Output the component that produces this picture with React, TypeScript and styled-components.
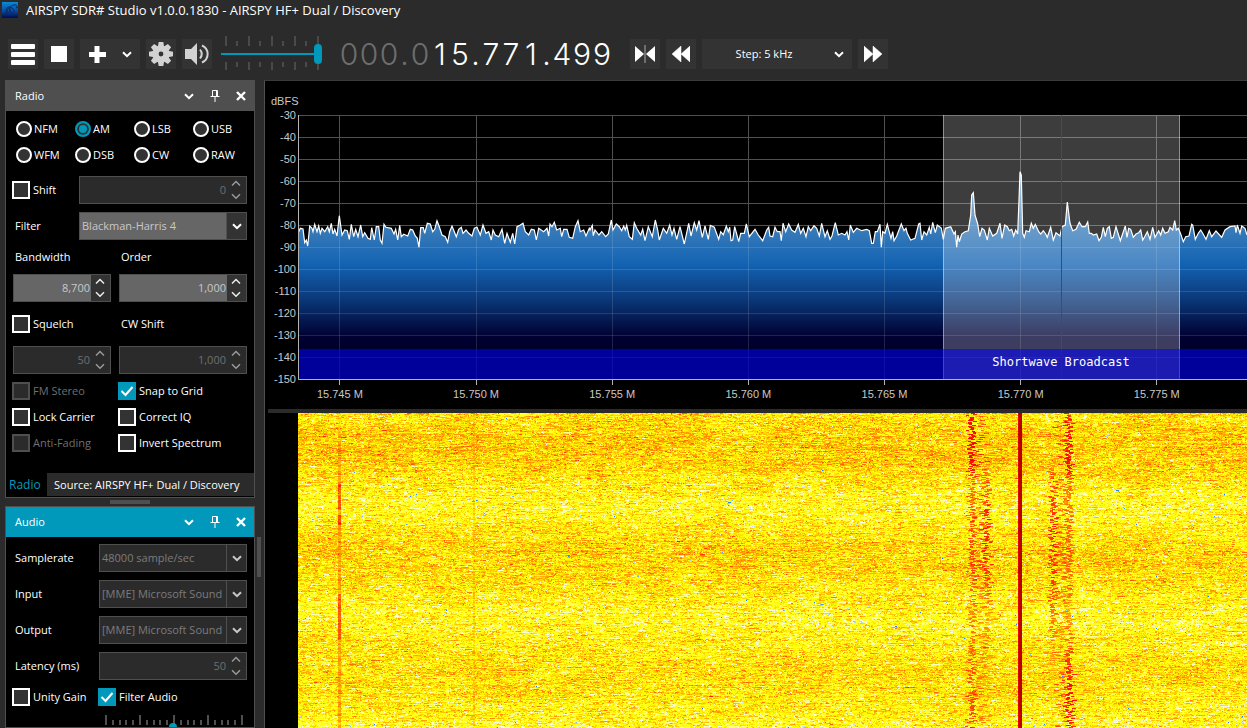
import React, { useEffect, useLayoutEffect, useRef, useState } from "react";
import styled, { createGlobalStyle } from "styled-components";

const color = {
  window: "#2b2b2b",
  button: "#333333",
  line: "#4f4f4f",
  accent: "#0099bc",
  dim: "#6f6f6f",
};

const GlobalStyle = createGlobalStyle`
  * { box-sizing: border-box; }
  body {
    margin: 0;
    background: ${color.window};
    color: #fff;
    font-family: "Open Sans", "Noto Sans", sans-serif;
    font-size: 11px;
    line-height: 16px;
  }
  button, input, select { font: inherit; color: inherit; margin: 0; }
`;

/* ---------- window chrome ---------- */

const Window = styled.div`
  display: flex;
  flex-direction: column;
  height: 100vh;
  overflow: hidden;
`;

const TitleBar = styled.header`
  display: flex;
  align-items: center;
  gap: 8px;
  height: 20px;
  padding-left: 2px;
  font-size: 13px;
  line-height: 20px;
  flex: none;
`;

const TitleText = styled.h1`
  margin: 0;
  font-size: inherit;
  font-weight: 400;
`;

const Toolbar = styled.div`
  display: flex;
  align-items: center;
  gap: 6px;
  height: 60px;
  padding: 8px 8px 0;
  flex: none;
`;

const ToolButton = styled.button<{ $wide?: boolean }>`
  display: flex;
  align-items: center;
  justify-content: ${(p) => (p.$wide ? "space-between" : "center")};
  width: ${(p) => (p.$wide ? 60 : 30)}px;
  height: 30px;
  padding: ${(p) => (p.$wide ? "0 8px" : "0")};
  border: 0;
  background: ${color.button};
  flex: none;
`;

const VolumeBox = styled.div`
  position: relative;
  width: 104px;
  height: 36px;
  margin-left: 3px;
  flex: none;
`;

const VolumeTicks = styled.svg`
  position: absolute;
  inset: 0;
`;

const VolumeRange = styled.input`
  position: relative;
  display: block;
  appearance: none;
  width: 101px;
  height: 36px;
  background: transparent;
  &::-webkit-slider-runnable-track {
    height: 2px;
    background: ${color.accent};
  }
  &::-webkit-slider-thumb {
    appearance: none;
    width: 8px;
    height: 20px;
    margin-top: -9px;
    border-radius: 4px;
    background: ${color.accent};
  }
`;

const Frequency = styled.output`
  display: flex;
  margin: 0 12px 0 8px;
  font-family: Inter, "Open Sans", sans-serif;
  font-size: 30px;
  font-weight: 300;
  line-height: 30px;
  flex: none;
`;

const Digit = styled.span<{ $dim: boolean; $dot: boolean }>`
  width: ${(p) => (p.$dot ? 11 : 20)}px;
  text-align: center;
  color: ${(p) => (p.$dim ? "#6e6e6e" : "#fff")};
`;

const StepBox = styled.div`
  display: grid;
  align-items: center;
  width: 150px;
  height: 30px;
  background: ${color.button};
  flex: none;
`;

const StepSelect = styled.select`
  grid-area: 1 / 1;
  appearance: none;
  width: 100%;
  height: 30px;
  padding: 0 26px 0 0;
  border: 0;
  background: transparent;
  text-align: center;
  text-align-last: center;
`;

const StepArrow = styled.span`
  grid-area: 1 / 1;
  display: flex;
  justify-self: end;
  padding-right: 8px;
  pointer-events: none;
`;

/* ---------- side panels ---------- */

const Body = styled.div`
  display: flex;
  flex: 1;
  min-height: 0;
`;

const Sidebar = styled.aside`
  display: flex;
  flex-direction: column;
  width: 264px;
  padding-left: 5px;
  flex: none;
`;

const Panel = styled.section`
  width: 250px;
  border: 1px solid ${color.line};
  background: #000;
  overflow: hidden;
  flex: none;
`;

const PanelHead = styled.header<{ $active?: boolean }>`
  display: flex;
  align-items: center;
  gap: 8px;
  height: 30px;
  padding: 0 4px 0 9px;
  background: ${(p) => (p.$active ? color.accent : color.line)};
`;

const PanelTitle = styled.h2`
  flex: 1;
  margin: 0;
  font-size: inherit;
  font-weight: 400;
`;

const IconButton = styled.button`
  display: flex;
  align-items: center;
  justify-content: center;
  width: 18px;
  height: 20px;
  padding: 0;
  border: 0;
  background: transparent;
`;

const PanelBody = styled.div<{ $tight?: boolean }>`
  padding: ${(p) => (p.$tight ? 3 : 5)}px 7px 0 6px;
`;

const ModeGrid = styled.fieldset`
  display: grid;
  grid-template-columns: repeat(4, 59px);
  grid-auto-rows: 26px;
  margin: 0 0 4px;
  padding: 0 0 0 4px;
  border: 0;
`;

const Check = styled.label<{ $off?: boolean; $near?: boolean }>`
  display: flex;
  align-items: center;
  gap: ${(p) => (p.$near ? 2 : 3)}px;
  white-space: nowrap;
  color: ${(p) => (p.$off ? color.dim : "#fff")};
`;

const RadioInput = styled.input`
  appearance: none;
  width: 16px;
  height: 16px;
  border: 2px solid #fff;
  border-radius: 50%;
  background: ${color.button};
  flex: none;
  &:checked {
    border-color: ${color.accent};
    background: ${color.accent};
    box-shadow: inset 0 0 0 2px ${color.button};
  }
`;

const TickFrame = styled.span`
  display: grid;
  flex: none;
`;

const TickInput = styled.input`
  grid-area: 1 / 1;
  appearance: none;
  width: 18px;
  height: 18px;
  border: 2px solid #fff;
  background: ${color.button};
  &:checked {
    border-color: ${color.accent};
    background: ${color.accent};
  }
  &:disabled {
    border-color: ${color.line};
    background: ${color.window};
  }
`;

const TickMark = styled.svg`
  grid-area: 1 / 1;
  pointer-events: none;
`;

const Row = styled.div<{ $cols: string; $height?: number }>`
  display: grid;
  grid-template-columns: ${(p) => p.$cols} minmax(0, 1fr);
  align-items: center;
  height: ${(p) => p.$height ?? 36}px;
`;

const FieldLabel = styled.label`
  padding-left: 3px;
`;

const Field = styled.div<{ $off?: boolean }>`
  display: flex;
  height: 28px;
  border: 1px solid ${color.line};
  background: ${(p) => (p.$off ? color.window : "#666")};
  color: ${(p) => (p.$off ? color.dim : "#c8c8c8")};
`;

const NumberInput = styled.input`
  flex: 1;
  min-width: 0;
  padding: 0 1px;
  border: 0;
  background: transparent;
  text-align: right;
`;

const SpinButtons = styled.div<{ $off?: boolean }>`
  display: grid;
  grid-template-rows: 1fr 1fr;
  width: 19px;
  flex: none;
  background: ${(p) => (p.$off ? color.window : color.button)};
  color: ${(p) => (p.$off ? "#9a9a9a" : "#eee")};
`;

const SpinButton = styled.button`
  display: flex;
  align-items: center;
  justify-content: center;
  padding: 0 1px 0 0;
  border: 0;
  background: transparent;
`;

const SelectBox = styled.div<{ $off?: boolean }>`
  display: grid;
  grid-template-columns: minmax(0, 1fr) 20px;
  height: 28px;
  border: 1px solid ${color.line};
  background: ${(p) => (p.$off ? color.window : "#666")};
  color: ${(p) => (p.$off ? "#7c7c7c" : "#c8c8c8")};
`;

const SelectInput = styled.select`
  grid-area: 1 / 1 / 2 / 3;
  appearance: none;
  min-width: 0;
  padding: 0 22px 0 2px;
  border: 0;
  background: transparent;
  opacity: 1;
`;

const SelectArrow = styled.span<{ $off?: boolean }>`
  grid-area: 1 / 2;
  display: flex;
  align-items: center;
  justify-content: center;
  border-left: 1px solid ${color.line};
  background: ${(p) => (p.$off ? color.window : color.button)};
  color: ${(p) => (p.$off ? "#c8c8c8" : "#fff")};
  pointer-events: none;
`;

const Tabs = styled.div`
  display: flex;
  height: 24px;
  margin-top: 17px;
  padding-bottom: 1px;
`;

const Tab = styled.button<{ $current?: boolean }>`
  flex: ${(p) => (p.$current ? "none" : "1")};
  width: ${(p) => (p.$current ? "41px" : "auto")};
  padding: 0 ${(p) => (p.$current ? 3 : 7)}px;
  border: 0;
  background: ${(p) => (p.$current ? "#000" : color.window)};
  color: ${(p) => (p.$current ? color.accent : "#fff")};
  font-size: ${(p) => (p.$current ? 12 : 11)}px;
  text-align: left;
  white-space: nowrap;
`;

const Splitter = styled.div`
  display: flex;
  align-items: center;
  justify-content: center;
  width: 250px;
  height: 8px;
  flex: none;
`;

const Grip = styled.span`
  width: 40px;
  height: 4px;
  background: ${color.line};
`;

const AudioSlot = styled.div`
  display: flex;
  gap: 2px;
  flex: 1;
  min-height: 0;
`;

const ScrollThumb = styled.span`
  width: 4px;
  height: 40px;
  margin-top: 31px;
  background: ${color.line};
`;

const GainRow = styled.div`
  position: relative;
  width: 142px;
  height: 40px;
  margin: 0 0 0 92px;
`;

const GainTicks = styled.svg`
  position: absolute;
  inset: 0;
`;

const GainRange = styled.input`
  position: relative;
  appearance: none;
  display: block;
  width: 138px;
  height: 36px;
  background: transparent;
  &::-webkit-slider-runnable-track {
    height: 2px;
    background: ${color.accent};
  }
  &::-webkit-slider-thumb {
    appearance: none;
    width: 8px;
    height: 10px;
    margin-top: -4px;
    border-radius: 4px;
    background: ${color.accent};
  }
`;

/* ---------- signal displays ---------- */

const Display = styled.main`
  display: flex;
  flex-direction: column;
  flex: 1;
  min-width: 0;
  border-left: 1px solid ${color.line};
  border-top: 1px solid #3a3a3a;
  background: #000;
`;

const SpectrumBox = styled.div`
  height: 328px;
  overflow: hidden;
  flex: none;
`;

const SpectrumSvg = styled.svg`
  display: block;
`;

const AxisText = styled.text`
  font-family: "Liberation Sans", Arial, sans-serif;
  font-size: 11px;
  fill: #c8c8c8;
`;

const BandText = styled.text`
  font-family: "DejaVu Sans Mono", "Liberation Mono", monospace;
  font-size: 12px;
  fill: #fff;
`;

const DisplaySplitter = styled.div`
  height: 4px;
  margin-left: 3px;
  background: ${color.window};
  flex: none;
`;

const WaterfallBox = styled.div`
  flex: 1;
  min-height: 0;
  margin-left: 33px;
  overflow: hidden;
`;

const WaterfallCanvas = styled.canvas`
  display: block;
`;

/* ---------- icons ---------- */

const Chevron = ({ up, thin }: { up?: boolean; thin?: boolean }) => (
  <svg width="10" height="7" viewBox="0 0 10 7" fill="none" stroke="currentColor" strokeWidth={thin ? 1.5 : 2}>
    <path d={up ? "M1 5.5 5 1.5 9 5.5" : "M1 1.2 5 5.2 9 1.2"} />
  </svg>
);

const PinIcon = () => (
  <svg width="10" height="12" viewBox="0 0 10 12" fill="none" stroke="#fff">
    <path d="M2.5 6V.5H7.5V6M.5 6.5H9.5M5 7V12" />
    <path d="M6.5 1V6" />
  </svg>
);

const CloseIcon = () => (
  <svg width="10" height="10" viewBox="0 0 10 10" stroke="#fff" strokeWidth="2.4">
    <path d="M1 1 9 9M9 1 1 9" />
  </svg>
);

const AppIcon = () => (
  <svg width="16" height="16" viewBox="0 0 16 16">
    <defs>
      <linearGradient id="appfill" x1="0" y1="0" x2="0" y2="1">
        <stop offset="0" stopColor="#0a8ad8" />
        <stop offset=".5" stopColor="#0a52a8" />
        <stop offset="1" stopColor="#020a50" />
      </linearGradient>
    </defs>
    <rect width="16" height="16" fill="url(#appfill)" />
    <path
      d="M0 12C2 14 4 13 5 9S8 5 8 8 4 13 4 9 8 3 11 7 10 13 8 9 12 2 14 3 13 8 16 5"
      fill="none"
      stroke="#052a60"
    />
  </svg>
);

const GearIcon = () => (
  <svg width="24" height="24" viewBox="-12 -12 24 24" fill="#d2d2d2">
    {[0, 45, 90, 135, 180, 225, 270, 315].map((a) => (
      <path key={a} d="M-3.2 -7 -2.3 -12H2.3L3.2 -7Z" transform={`rotate(${a})`} />
    ))}
    <path fillRule="evenodd" d="M0-8.6A8.6 8.6 0 1 1 0 8.6 8.6 8.6 0 1 1 0-8.6ZM0-2.4A2.4 2.4 0 1 0 0 2.4 2.4 2.4 0 1 0 0-2.4Z" />
  </svg>
);

const SpeakerIcon = () => (
  <svg width="26" height="22" viewBox="0 0 26 22" fill="none" stroke="#d2d2d2">
    <path d="M1 6H7L13 0V22L7 16H1Z" fill="#d2d2d2" stroke="none" />
    <path d="M16 6.5Q19.5 11 16 15.5" strokeWidth="2" />
    <path d="M18 2.5C25.5 6 25.5 16 18 19.5" strokeWidth="2" />
  </svg>
);

/* ---------- small controls ---------- */

const HeadButtons = () => (
  <>
    <IconButton aria-label="Collapse"><Chevron /></IconButton>
    <IconButton aria-label="Pin"><PinIcon /></IconButton>
    <IconButton aria-label="Close"><CloseIcon /></IconButton>
  </>
);

function TickBox({ text, checked, off }: { text: string; checked?: boolean; off?: boolean }) {
  const [on, setOn] = useState(!!checked);
  return (
    <Check $off={off}>
      <TickFrame>
        <TickInput type="checkbox" checked={on} disabled={off} onChange={() => setOn(!on)} />
        {on && (
          <TickMark width="18" height="18" viewBox="0 0 18 18" fill="none" stroke="#fff" strokeWidth="2">
            <path d="M3.5 9 7.5 13 14.5 5" />
          </TickMark>
        )}
      </TickFrame>
      {text}
    </Check>
  );
}

function Spin({ id, value, off, label }: { id?: string; value: string; off?: boolean; label?: string }) {
  return (
    <Field $off={off}>
      <NumberInput id={id} aria-label={label} type="text" inputMode="numeric" defaultValue={value} disabled={off} />
      <SpinButtons $off={off}>
        <SpinButton aria-label="Increase" disabled={off}><Chevron up thin /></SpinButton>
        <SpinButton aria-label="Decrease" disabled={off}><Chevron thin /></SpinButton>
      </SpinButtons>
    </Field>
  );
}

function Choice({ id, value, off }: { id: string; value: string; off?: boolean }) {
  return (
    <SelectBox $off={off}>
      <SelectInput id={id} disabled={off} defaultValue={value}>
        <option>{value}</option>
      </SelectInput>
      <SelectArrow $off={off}><Chevron /></SelectArrow>
    </SelectBox>
  );
}

/* ---------- spectrum ---------- */

const REF_SPAN = 949;
const PLOT_LEFT = 33;
const PLOT_TOP = 34;
const PLOT_BOTTOM = 298;

// Trace samples as x,y pairs in three sweeps, each at three units per pixel.
const SWEEPS: [number, number, string][] = [
  [-36, -1, "110,455 115,445 123,447 128,488 133,480 137,498 143,438 150,445 153,455 158,433 165,455 170,438 175,460 180,445 188,455 197,440 202,455 208,430 213,462 218,448 225,468 232,407 240,465 248,450 256,452 262,478 268,433 275,470 281,448 288,470 296,435 302,470 308,458 318,475 325,478 329,443 337,480 343,440 350,440 355,480 360,490 366,433 372,442 388,445 396,462 401,448 407,480 413,436 418,470 425,463 437,468 445,448 452,450 460,468 466,475 471,502 476,443 484,443 488,460 496,430 505,432 512,455 518,448 525,422 532,440 540,465 550,470 557,487 563,455 570,438 577,455 583,470 590,448 598,442 603,460 612,450 620,460 630,468 637,445 645,442 655,465 663,435 672,460 680,455 688,480 693,450 700,465 710,470 720,448 728,490 735,460 745,487 752,460 758,492 765,440 775,435 783,430 790,455 800,465 808,448 817,450 823,480 830,445 845,455 855,445 860,468 864,432 870,440 877,427 884,450 895,445 899,470 905,448 915,448 922,472 932,475 940,440 948,422 955,455 965,450 972,468 982,445"],
  [292, 119, "0,90 7,76 10,107 15,90 27,105 35,95 47,110 55,102 64,60 69,90 79,72 88,80 95,92 101,78 106,90 110,76 118,110 127,118 133,68 140,85 152,105 158,88 165,122 175,80 187,110 196,60 203,90 208,120 220,85 230,100 239,75 246,105 252,85 260,118 270,80 283,132 296,70 303,108 313,68 320,90 327,62 337,112 345,78 355,118 361,76 373,82 386,118 392,95 400,104 409,78 415,95 419,82 423,122 428,120 434,80 446,125 452,100 463,100 469,72 478,110 495,88 505,105 518,122 530,90 536,82 540,108 548,110 555,82 562,95 570,95 574,122 579,70 587,95 596,72 605,90 615,97 625,73 632,100 640,85 648,110 655,80 662,92 672,77 680,85 688,108 695,70 705,110 712,92 720,118 726,108 736,68 745,105 755,100 765,105 771,95 776,120 781,75 790,97 800,85 815,92 830,88 838,92 845,130 850,130 856,95 862,95 870,73 874,142 878,95 885,100 892,73 903,115 908,95 912,122 920,108 934,72 942,92 948,85 952,100 962,120 975,115 986,72"],
  [622, 19, "0,370 5,420 12,395 20,405 28,382 32,402 38,367 46,398 52,375 64,384 70,418 76,385 92,380 102,402 106,395 110,442 114,405 118,425 125,402 135,395 145,392 152,345 155,285 160,278 165,345 173,372 179,410 186,385 193,390 202,420 208,385 218,408 230,400 240,370 246,415 254,375 262,380 268,392 275,388 281,408 287,390 293,402 297,300 300,215 304,225 308,400 313,412 318,392 328,395 334,370 340,385 346,373 356,395 362,402 370,392 377,402 382,412 392,382 400,420 408,398 420,408 426,380 436,375 442,306 450,370 458,392 468,388 478,367 486,380 496,380 503,366 508,400 514,400 520,405 530,402 537,422 544,412 550,382 556,410 562,385 568,380 574,415 580,412 588,380 601,422 616,378 621,412 626,385 632,388 640,412 648,402 656,398 662,390 668,420 674,410 682,395 690,418 698,382 705,412 716,392 722,405 728,385 735,400 745,395 750,382 758,390 764,362 769,390 775,385 782,402 790,425 797,410 807,408 815,373 818,375 826,418 835,400 842,390 848,400 858,418 868,392 875,410 888,393 905,412 915,390 930,380 945,378 948,398 952,375 960,400 965,378 975,385 981,405"],
];

const TRACE = SWEEPS.flatMap(([dx, dy, data]) =>
  data.split(" ").map((pair) => {
    const [x, y] = pair.split(",").map(Number);
    return [dx + x / 3, dy + y / 3] as const;
  })
);

const LEVELS = Array.from({ length: 13 }, (_, i) => -30 - i * 10);
const TICKS = [15.745, 15.75, 15.755, 15.76, 15.765, 15.77, 15.775].map((f, i) => ({
  text: `${f.toFixed(3)} M`,
  at: 41.9 + i * 136.15,
}));

function useSize<T extends HTMLElement>(initial: [number, number]) {
  const ref = useRef<T>(null);
  const [size, setSize] = useState(initial);
  useLayoutEffect(() => {
    const el = ref.current;
    if (!el) return;
    const read = () => setSize([el.clientWidth, el.clientHeight]);
    read();
    const watcher = new ResizeObserver(read);
    watcher.observe(el);
    return () => watcher.disconnect();
  }, []);
  return [ref, size] as const;
}

function Spectrum() {
  const [ref, [width]] = useSize<HTMLDivElement>([982, 328]);
  const span = Math.max(width - PLOT_LEFT, 100);
  const px = (x: number) => PLOT_LEFT + (x * span) / REF_SPAN;
  const snap = (x: number) => Math.floor(px(x)) + 0.5;
  const line = TRACE.map(([x, y], i) => `${i ? "L" : "M"}${px(x).toFixed(1)} ${y.toFixed(1)}`).join("");
  const area = `${line}L${width} ${PLOT_BOTTOM}L${PLOT_LEFT} ${PLOT_BOTTOM}Z`;
  const grid =
    LEVELS.map((_, i) => `M${PLOT_LEFT} ${PLOT_TOP + i * 22 + 0.5}H${width}`).join("") +
    TICKS.map((t) => `M${snap(t.at)} ${PLOT_TOP}V${PLOT_BOTTOM}`).join("");
  const left = snap(645);
  const right = snap(881);
  const centre = snap(763);
  return (
    <SpectrumBox ref={ref}>
      <SpectrumSvg width={width} height="328" role="img" aria-label="Spectrum">
        <defs>
          <linearGradient id="level" gradientUnits="userSpaceOnUse" x1="0" y1={PLOT_TOP} x2="0" y2={PLOT_BOTTOM}>
            <stop offset="0" stopColor="#b4c8c8" />
            <stop offset=".56" stopColor="#1464b4" />
            <stop offset=".7" stopColor="#0a3778" />
            <stop offset=".84" stopColor="#000032" />
            <stop offset="1" stopColor="#00001e" />
          </linearGradient>
          <clipPath id="under"><path d={area} /></clipPath>
        </defs>
        <path d={grid} stroke="#505050" fill="none" />
        <path d={area} fill="url(#level)" />
        <path d={grid} stroke="#fff" strokeOpacity=".13" fill="none" clipPath="url(#under)" />
        <path d={line} stroke="#fff" strokeWidth="1.2" fill="none" />
        <rect x={left} y={PLOT_TOP} width={right - left} height={PLOT_BOTTOM - PLOT_TOP} fill="#fff" fillOpacity=".24" />
        <path d={`M${left} ${PLOT_TOP}V${PLOT_BOTTOM}M${right} ${PLOT_TOP}V${PLOT_BOTTOM}`} stroke="#fff" strokeOpacity=".5" />
        <path d={`M${centre} ${PLOT_TOP}V${PLOT_BOTTOM}`} stroke="#e00c0c" />
        <rect x={PLOT_LEFT} y="268" width={span} height="30" fill="#0000ff" fillOpacity=".54" />
        <BandText x={px(763)} y="285" textAnchor="middle">Shortwave Broadcast</BandText>
        <path d={`M${PLOT_LEFT + 0.5} ${PLOT_TOP}V${PLOT_BOTTOM + 0.5}H${width}`} stroke="#b4b4b4" fill="none" />
        <AxisText x="6" y="24">dBFS</AxisText>
        {LEVELS.map((db, i) => (
          <AxisText key={db} x="31" y={PLOT_TOP + i * 22 + 4} textAnchor="end">{db}</AxisText>
        ))}
        {TICKS.map((t) => (
          <React.Fragment key={t.text}>
            <path d={`M${snap(t.at)} ${PLOT_BOTTOM}v6`} stroke="#b4b4b4" />
            <AxisText x={px(t.at)} y="317" textAnchor="middle">{t.text}</AxisText>
          </React.Fragment>
        ))}
      </SpectrumSvg>
    </SpectrumBox>
  );
}

/* ---------- waterfall ---------- */

const HEAT: [number, number, number, number][] = [
  [-3.4, 40, 130, 255],
  [-3, 170, 215, 255],
  [-2.5, 255, 255, 255],
  [-1.7, 255, 255, 190],
  [-0.9, 255, 255, 60],
  [-0.1, 255, 255, 0],
  [0.7, 255, 215, 0],
  [1.7, 255, 160, 0],
  [2.8, 255, 105, 0],
  [4, 255, 25, 0],
  [5.5, 225, 0, 0],
  [7, 175, 0, 0],
];

function heat(t: number) {
  if (t <= HEAT[0][0]) return HEAT[0].slice(1);
  for (let i = 1; i < HEAT.length; i++) {
    if (t <= HEAT[i][0]) {
      const a = HEAT[i - 1];
      const b = HEAT[i];
      const k = (t - a[0]) / (b[0] - a[0]);
      return [1, 2, 3].map((c) => a[c] + (b[c] - a[c]) * k);
    }
  }
  return HEAT[HEAT.length - 1].slice(1);
}

// Slow fading of the noise floor: [row, level].
const FADING = [[0, 0.2], [30, 0.7], [50, 0.6], [68, 0], [88, -0.6], [108, -0.3], [130, 0.35], [155, 0.5], [175, 0], [205, -0.6], [225, -0.2], [250, 0.2], [270, 0.25], [300, -0.3], [315, -0.5]];

function along(table: number[][], y: number) {
  for (let i = 1; i < table.length; i++) {
    if (y <= table[i][0]) {
      const [y0, v0] = table[i - 1];
      const [y1, v1] = table[i];
      return v0 + ((v1 - v0) * (y - y0)) / (y1 - y0);
    }
  }
  return table[table.length - 1][1];
}

// Wandering sideband carriers: centre, strength over time.
const CARRIERS = [
  { x: 673, level: [[0, 4.6], [55, 4.4], [70, 2.8], [140, 3.4], [200, 2.6], [260, 3], [315, 3.4]] },
  { x: 688, level: [[0, 0], [45, 1], [65, 2.8], [100, 4], [165, 3.4], [200, 2], [260, 1.8], [290, 0], [315, 0]] },
  { x: 754, level: [[0, 0], [45, 1], [65, 3.4], [120, 3.8], [180, 3.2], [230, 2.2], [260, 1], [290, 0], [315, 0]] },
  { x: 770, level: [[0, 4], [55, 4.4], [70, 2.8], [150, 2.8], [200, 2], [240, 3.4], [290, 4.4], [315, 4]] },
];

function paintWaterfall(canvas: HTMLCanvasElement, w: number, h: number) {
  const ctx = canvas.getContext("2d");
  if (!ctx || w < 1 || h < 1) return;
  let seed = 20240611;
  const rand = () => {
    seed = (seed * 1664525 + 1013904223) >>> 0;
    return seed / 4294967296;
  };
  const gauss = () => (rand() + rand() + rand() + rand() - 2) * 1.73;
  const scale = w / REF_SPAN;
  const image = ctx.createImageData(w, h);
  const row = new Float32Array(w);
  const patch = Array.from({ length: Math.ceil(w / 30) + 2 }, gauss);
  for (let y = 0; y < h; y++) {
    const level = along(FADING, y % 316) + 0.2 + gauss() * 0.12;
    for (let i = 0; i < patch.length; i++) patch[i] = patch[i] * 0.85 + gauss() * 0.35;
    let value = gauss();
    let slow = 0;
    for (let x = 0; x < w; x++) {
      if (rand() < 0.62) value = gauss();
      slow = slow * 0.88 + gauss() * 0.3;
      const i = Math.floor(x / 30);
      const k = (x % 30) / 30;
      const drift = patch[i] * (1 - k) + patch[i + 1] * k;
      let t = level + value * 0.85 + slow * 0.6 + drift * 0.3;
      if (rand() < 0.0012) t -= 3;
      row[x] = t;
    }
    const add = (from: number, width: number, amount: number) => {
      const start = Math.round(from * scale);
      for (let x = start; x < start + width; x++) if (x >= 0 && x < w) row[x] = Math.max(row[x], row[x] * 0.35 + amount);
    };
    const strong = (y > 70 && y < 97) || (y > 101 && y < 112) || (y > 180 && y < 227);
    const pulse = strong ? 2.6 + rand() * 0.8 : 0.8 + rand() * 1.5;
    add(40, 3, y > 20 ? pulse : rand() * 1.2);
    add(175, 2, rand() * 1.5);
    CARRIERS.forEach((c) => {
      const strength = along(c.level, y % 316);
      if (strength <= 0) return;
      const wobble = Math.sin(y * 1.7 + c.x) * 2 + gauss() * 1.5;
      if (rand() < 0.35 + strength * 0.13) add(c.x + wobble - 1, 3 + Math.floor(rand() * 3), strength * 0.95);
      if (rand() < 0.35) add(c.x + (c.x === 673 || c.x === 754 ? 8 : -8) + gauss() * 4, 5, strength * 0.7);
    });
    add(720, 1, 5.2);
    add(721, 3, 6.8);
    for (let x = 0; x < w; x++) {
      const [r, g, b] = heat(row[x]);
      const p = (y * w + x) * 4;
      image.data[p] = r;
      image.data[p + 1] = g;
      image.data[p + 2] = b;
      image.data[p + 3] = 255;
    }
  }
  ctx.putImageData(image, 0, 0);
}

function Waterfall() {
  const [ref, [w, h]] = useSize<HTMLDivElement>([949, 315]);
  const canvas = useRef<HTMLCanvasElement>(null);
  useEffect(() => {
    if (canvas.current) paintWaterfall(canvas.current, w, h);
  }, [w, h]);
  return (
    <WaterfallBox ref={ref}>
      <WaterfallCanvas ref={canvas} width={w} height={h} role="img" aria-label="Waterfall" />
    </WaterfallBox>
  );
}

/* ---------- page ---------- */

const FREQUENCY = "000.015.771.499";
const MODES = ["NFM", "AM", "LSB", "USB", "WFM", "DSB", "CW", "RAW"];

function MainToolbar() {
  const [volume, setVolume] = useState(100);
  return (
    <Toolbar role="toolbar">
      <ToolButton aria-label="Menu">
        <svg width="24" height="21" fill="#fff">
          <rect width="24" height="5" rx="1" /><rect y="8" width="24" height="5" rx="1" /><rect y="16" width="24" height="5" rx="1" />
        </svg>
      </ToolButton>
      <ToolButton aria-label="Stop">
        <svg width="16" height="16"><rect width="16" height="16" fill="#fff" /></svg>
      </ToolButton>
      <ToolButton $wide aria-label="Add">
        <svg width="18" height="18" viewBox="0 0 18 18"><path d="M6.5 1H11.5V7H18V12H11.5V18H6.5V12H1V7H6.5Z" fill="#fff" /></svg>
        <Chevron />
      </ToolButton>
      <ToolButton aria-label="Settings"><GearIcon /></ToolButton>
      <ToolButton aria-label="Mute"><SpeakerIcon /></ToolButton>
      <VolumeBox>
        <VolumeTicks width="104" height="36" stroke="#4a4a4a" strokeWidth="2">
          <path d="M5 0V10M28 0V10M51 0V10M74 0V10M97 0V10M5 26V34M28 26V34M51 26V34M74 26V34M97 26V34" />
          <path d="M16 5V10M39 5V10M62 5V10M85 5V10M16 26V31M39 26V31M62 26V31M85 26V31" />
        </VolumeTicks>
        <VolumeRange type="range" aria-label="Volume" value={volume} onChange={(e) => setVolume(Number(e.target.value))} />
      </VolumeBox>
      <Frequency aria-label="Frequency">
        {FREQUENCY.split("").map((c, i) => (
          <Digit key={i} $dot={c === "."} $dim={i < 5}>{c}</Digit>
        ))}
      </Frequency>
      <ToolButton aria-label="Center">
        <svg width="20" height="18" viewBox="0 0 20 18" fill="#fff">
          <path d="M0 1 9 9 0 17ZM20 1 11 9 20 17Z" /><path d="M10 0V18" stroke="#aaa" />
        </svg>
      </ToolButton>
      <ToolButton aria-label="Step down">
        <svg width="18" height="16" viewBox="0 0 18 16" fill="#fff"><path d="M9 0V16L0 8ZM18 0V16L9 8Z" stroke="#fff" strokeWidth=".5" /></svg>
      </ToolButton>
      <StepBox>
        <StepSelect aria-label="Step"><option>Step: 5 kHz</option></StepSelect>
        <StepArrow><Chevron /></StepArrow>
      </StepBox>
      <ToolButton aria-label="Step up">
        <svg width="18" height="16" viewBox="0 0 18 16" fill="#fff"><path d="M0 0V16L9 8ZM9 0V16L18 8Z" stroke="#fff" strokeWidth=".5" /></svg>
      </ToolButton>
    </Toolbar>
  );
}

function RadioPanel() {
  const [mode, setMode] = useState("AM");
  return (
    <Panel>
      <PanelHead><PanelTitle>Radio</PanelTitle><HeadButtons /></PanelHead>
      <PanelBody>
        <ModeGrid aria-label="Mode">
          {MODES.map((m) => (
            <Check key={m} $near>
              <RadioInput type="radio" name="mode" checked={mode === m} onChange={() => setMode(m)} />
              {m}
            </Check>
          ))}
        </ModeGrid>
        <Row $cols="67px"><TickBox text="Shift" /><Spin label="Shift" value="0" off /></Row>
        <Row $cols="67px"><FieldLabel htmlFor="filter">Filter</FieldLabel><Choice id="filter" value="Blackman-Harris 4" /></Row>
        <Row $cols="106px" $height={26}><FieldLabel htmlFor="bandwidth">Bandwidth</FieldLabel><FieldLabel htmlFor="order">Order</FieldLabel></Row>
        <Row $cols="1px 98px 8px"><span /><Spin id="bandwidth" value="8,700" /><span /><Spin id="order" value="1,000" /></Row>
        <Row $cols="106px"><TickBox text="Squelch" /><FieldLabel htmlFor="cwshift">CW Shift</FieldLabel></Row>
        <Row $cols="1px 98px 8px"><span /><Spin label="Squelch" value="50" off /><span /><Spin id="cwshift" value="1,000" off /></Row>
        <Row $cols="106px" $height={26}><TickBox text="FM Stereo" off /><TickBox text="Snap to Grid" checked /></Row>
        <Row $cols="106px" $height={26}><TickBox text="Lock Carrier" /><TickBox text="Correct IQ" /></Row>
        <Row $cols="106px" $height={26}><TickBox text="Anti-Fading" off /><TickBox text="Invert Spectrum" /></Row>
      </PanelBody>
      <Tabs role="tablist">
        <Tab role="tab" aria-selected="true" $current>Radio</Tab>
        <Tab role="tab" aria-selected="false">Source: AIRSPY HF+ Dual / Discovery</Tab>
      </Tabs>
    </Panel>
  );
}

function AudioPanel() {
  const [gain, setGain] = useState(50);
  return (
    <Panel>
      <PanelHead $active><PanelTitle>Audio</PanelTitle><HeadButtons /></PanelHead>
      <PanelBody $tight>
        <Row $cols="87px"><FieldLabel htmlFor="rate">Samplerate</FieldLabel><Choice id="rate" value="48000 sample/sec" off /></Row>
        <Row $cols="87px"><FieldLabel htmlFor="input">Input</FieldLabel><Choice id="input" value="[MME] Microsoft Sound" off /></Row>
        <Row $cols="87px"><FieldLabel htmlFor="output">Output</FieldLabel><Choice id="output" value="[MME] Microsoft Sound" off /></Row>
        <Row $cols="87px"><FieldLabel htmlFor="latency">Latency (ms)</FieldLabel><Spin id="latency" value="50" off /></Row>
        <Row $cols="86px" $height={26}><TickBox text="Unity Gain" /><TickBox text="Filter Audio" checked /></Row>
        <GainRow>
          <GainTicks width="142" height="40" fill={color.line}>
            {Array.from({ length: 21 }, (_, i) => (
              <rect key={i} x={1 + Math.round(i * 6.8)} y={i % 5 ? 10 : 5} width="2" height={i % 5 ? 5 : 10} />
            ))}
          </GainTicks>
          <GainRange type="range" aria-label="Gain" value={gain} onChange={(e) => setGain(Number(e.target.value))} />
        </GainRow>
      </PanelBody>
    </Panel>
  );
}

export default function App() {
  return (
    <Window>
      <GlobalStyle />
      <TitleBar>
        <AppIcon />
        <TitleText>AIRSPY SDR# Studio v1.0.0.1830 - AIRSPY HF+ Dual / Discovery</TitleText>
      </TitleBar>
      <MainToolbar />
      <Body>
        <Sidebar>
          <RadioPanel />
          <Splitter><Grip /></Splitter>
          <AudioSlot>
            <AudioPanel />
            <ScrollThumb />
          </AudioSlot>
        </Sidebar>
        <Display>
          <Spectrum />
          <DisplaySplitter />
          <Waterfall />
        </Display>
      </Body>
    </Window>
  );
}
